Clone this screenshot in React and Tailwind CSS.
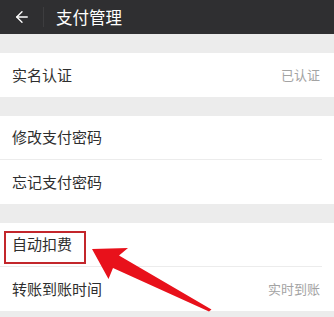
import { ArrowLeft } from 'lucide-react';

const font = { fontFamily: '"Noto Sans CJK SC", "Noto Sans", sans-serif' };

function Row({ label, value, divider }) {
  return (
    <div className="bg-white">
      <div className={`h-[44px] flex items-center justify-between pl-[12px] pr-[14px] ${divider ? 'border-b border-[#ececec] mr-[12px] pr-[2px]' : ''}`}>
        <span className="text-[15px] text-[#2e2e2e]">{label}</span>
        {value && <span className="text-[13px] text-[#a3a3a3]">{value}</span>}
      </div>
    </div>
  );
}

export default function App() {
  return (
    <div className="relative w-[334px] h-[317px] overflow-hidden bg-[#ececec]" style={font}>
      {/* Header */}
      <div className="h-[34px] bg-[#2f2f31] flex items-center">
        <div className="w-[43px] flex justify-center pl-[1px]">
          <ArrowLeft className="w-[18px] h-[18px] text-white" strokeWidth={1.8} />
        </div>
        <div className="w-px h-[20px] bg-[#3d3d3f]" />
        <span className="ml-[12px] text-[16.5px] text-white">支付管理</span>
      </div>

      <div className="h-[19px]" />
      <Row label="实名认证" value="已认证" />

      <div className="h-[19px]" />
      <Row label="修改支付密码" divider />
      <Row label="忘记支付密码" />

      <div className="h-[19px]" />
      <Row label="自动扣费" divider />
      <Row label="转账到账时间" value="实时到账" />

      {/* annotation */}
      <div className="absolute left-[4px] top-[231px] w-[82px] h-[33px] border-2 border-[#c3262b]" />
      <svg className="absolute left-0 top-0" width="334" height="317" viewBox="0 0 334 317">
        <polygon
          points="92,249 128,248 119,255.5 211.5,309.5 209,311.5 113,268 108.5,279"
          fill="#e8111b"
        />
      </svg>
    </div>
  );
}
